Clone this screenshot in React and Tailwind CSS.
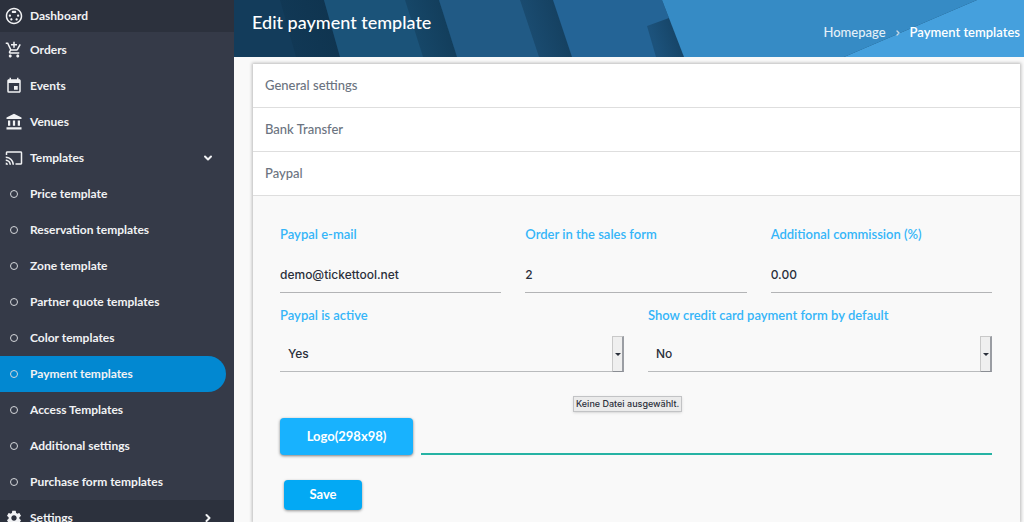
import { useState } from 'react';
import {
  MdAccountBalance,
  MdAddShoppingCart,
  MdCast,
  MdEvent,
  MdOutlineSettingsInputSvideo,
  MdSettings,
} from 'react-icons/md';
import { ChevronDown, ChevronRight } from 'lucide-react';

const mainItems = [
  { label: 'Orders', icon: MdAddShoppingCart },
  { label: 'Events', icon: MdEvent },
  { label: 'Venues', icon: MdAccountBalance },
  { label: 'Templates', icon: MdCast, open: true },
];

const templateItems = [
  'Price template',
  'Reservation templates',
  'Zone template',
  'Partner quote templates',
  'Color templates',
  'Payment templates',
  'Access Templates',
  'Additional settings',
  'Purchase form templates',
];

const textFields = [
  { id: 'email', label: 'Paypal e-mail', value: 'demo@tickettool.net' },
  { id: 'order', label: 'Order in the sales form', value: '2' },
  { id: 'commission', label: 'Additional commission (%)', value: '0.00' },
];

const selectFields = [
  { id: 'active', label: 'Paypal is active', value: 'Yes' },
  { id: 'card-form', label: 'Show credit card payment form by default', value: 'No' },
];

function Sidebar() {
  return (
    <nav className="w-[234px] shrink-0 bg-[#353a48] text-[12px] font-bold text-[#f1f2f4]">
      <a href="#dashboard" className="flex h-8 items-center bg-[#2c313d] pl-[5px]">
        <MdOutlineSettingsInputSvideo className="mr-[7px] size-[18px]" />
        Dashboard
      </a>
      <ul>
        {mainItems.map(({ label, icon: Icon, open }) => (
          <li key={label}>
            <a href={`#${label.toLowerCase()}`} className="flex h-9 items-center pr-5 pl-[5px]">
              <Icon className="mr-[7px] size-[18px]" />
              {label}
              {open && <ChevronDown className="ml-auto size-3" strokeWidth={4} />}
            </a>
          </li>
        ))}
      </ul>
      <ul>
        {templateItems.map((label) => (
          <li key={label} className="pr-2">
            <a
              href="#templates"
              className={`flex h-9 items-center rounded-r-full pl-2.5 ${label === 'Payment templates' ? 'bg-[#0288d1]' : ''}`}
            >
              <span className="mr-3 size-2 rounded-full border border-[#d5d7db]" />
              {label}
            </a>
          </li>
        ))}
      </ul>
      <a href="#settings" className="flex h-9 items-center bg-[#2c313d] pr-5 pl-[5px]">
        <MdSettings className="mr-[7px] size-[18px]" />
        Settings
        <ChevronRight className="ml-auto size-3" strokeWidth={4} />
      </a>
    </nav>
  );
}

function BannerArt() {
  return (
    <svg className="absolute inset-0 size-full" viewBox="0 0 790 57" preserveAspectRatio="none" aria-hidden="true">
      <defs>
        {/* tilted so that the fade runs across the slanted bands */}
        <linearGradient id="shade" x1="0.2" y1="0.6" x2="0.8" y2="0.4">
          <stop offset="0" stopColor="#0d3049" stopOpacity="0.35" />
          <stop offset="1" stopColor="#0d3049" stopOpacity="0.6" />
        </linearGradient>
      </defs>
      <rect width="790" height="57" fill="#133c5b" />
      <path d="M46 0H90L106 57H62Z" fill="url(#shade)" />
      <path d="M90 0H205L223 57H106Z" fill="#1b5379" />
      <path d="M171 0H205L223 57H189Z" fill="url(#shade)" />
      <path d="M205 0H319L338 57H223Z" fill="#215a85" />
      <path d="M286 0H319L338 57H305Z" fill="url(#shade)" />
      <path d="M319 0H428L450 57H338Z" fill="#246496" />
      <path d="M413 26L435 18L450 57H422Z" fill="url(#shade)" />
      <path d="M428 0H743L610 57H450Z" fill="#368bc5" />
      <path d="M743 0H790V57H610Z" fill="#45a0dd" />
    </svg>
  );
}

function Banner() {
  return (
    <header className="relative h-[57px]">
      <BannerArt />
      <div className="relative flex h-full justify-between pr-1 pl-[18px] text-white">
        <h1 className="pt-2 text-[18px] leading-7 font-medium">Edit payment template</h1>
        <div className="flex items-center gap-2 pt-2 text-[13px]">
          <a href="#home" className="font-medium text-[#e4f0f8]">Homepage</a>
          <ChevronRight className="size-2 text-[#c9d9e6]" strokeWidth={4} />
          <span className="font-semibold">Payment templates</span>
        </div>
      </div>
    </header>
  );
}

function TextField({ id, label, value }) {
  const [text, setText] = useState(value);
  return (
    <div>
      <label htmlFor={id} className="block text-[13px] leading-5 font-semibold text-[#35b5f8]">{label}</label>
      <input
        id={id}
        value={text}
        onChange={(e) => setText(e.target.value)}
        className="mt-3 h-[37px] w-full border-b border-[#b3b4b6] bg-transparent font-['Inter',sans-serif] text-[12px] font-medium text-[#2b303b] outline-none"
      />
    </div>
  );
}

function SelectField({ id, label, value }) {
  const [option, setOption] = useState(value);
  return (
    <div>
      <label htmlFor={id} className="block text-[13px] leading-5 font-semibold text-[#35b5f8]">{label}</label>
      <div className="relative mt-[11px]">
        <select
          id={id}
          value={option}
          onChange={(e) => setOption(e.target.value)}
          className="block h-9 w-full appearance-none border-b border-[#b9bbbd] pl-2 font-['Inter',sans-serif] text-[12px] font-medium text-[#2b303b] outline-none"
        >
          <option>Yes</option>
          <option>No</option>
        </select>
        {/* raised arrow button at the end of the field */}
        <span className="pointer-events-none absolute inset-y-0 right-0 flex w-3 items-center justify-center border border-t-[#c9c9c9] border-r-2 border-r-[#9a9da3] border-b-[#8a8d93] border-l-[#c9c9c9] bg-[#efefef]">
          <span className="border-x-3 border-t-3 border-x-transparent border-t-[#2b303b]" />
        </span>
      </div>
    </div>
  );
}

export default function App() {
  return (
    <div className="flex h-screen overflow-hidden bg-[#f9f9f9] font-['Lato','Liberation_Sans',sans-serif]">
      <Sidebar />
      <div className="flex min-w-0 flex-1 flex-col">
        <Banner />
        <main className="mt-[7px] mr-1 ml-[19px] flex-1 shadow-[0_0_3px_1px_rgba(0,0,0,0.25)]">
          {['General settings', 'Bank Transfer', 'Paypal'].map((title) => (
            <h2 key={title} className="border-b border-[#dedede] bg-white text-[13px] font-medium text-[#6b7380]">
              <button type="button" className="block h-[43px] w-full px-3 text-left">{title}</button>
            </h2>
          ))}
          <form className="pt-7 pr-7 pl-[27px]" onSubmit={(e) => e.preventDefault()}>
            <div className="grid grid-cols-3 gap-6">
              {textFields.map((field) => (
                <TextField key={field.id} {...field} />
              ))}
            </div>
            <div className="mt-3 grid grid-cols-2 gap-6">
              {selectFields.map((field) => (
                <SelectField key={field.id} {...field} />
              ))}
            </div>
            <div className="relative mt-[46px] flex items-end gap-2">
              <button
                type="button"
                className="h-[37px] w-[133px] rounded-sm bg-[#18b2fe] text-[13px] font-bold text-white shadow-[0_1px_3px_rgba(0,0,0,0.5)]"
              >
                Logo(298x98)
              </button>
              <input aria-label="Logo file" readOnly className="h-9 min-w-0 flex-1 border-b-2 border-[#26b3a4] outline-none" />
              <span
                role="tooltip"
                className="absolute -top-[22px] left-[293px] border border-[#c2c3c5] bg-[#ebebeb] px-0.5 font-['Inter',sans-serif] text-[9px] leading-[14px] font-medium text-[#2b303b] shadow-sm"
              >
                Keine Datei ausgewählt.
              </span>
            </div>
            <button
              type="submit"
              className="mt-[25px] ml-1 h-[30px] w-[78px] rounded-sm bg-[#03a9f4] text-[13px] font-bold text-white shadow-[0_1px_3px_rgba(0,0,0,0.4)]"
            >
              Save
            </button>
          </form>
        </main>
      </div>
    </div>
  );
}
